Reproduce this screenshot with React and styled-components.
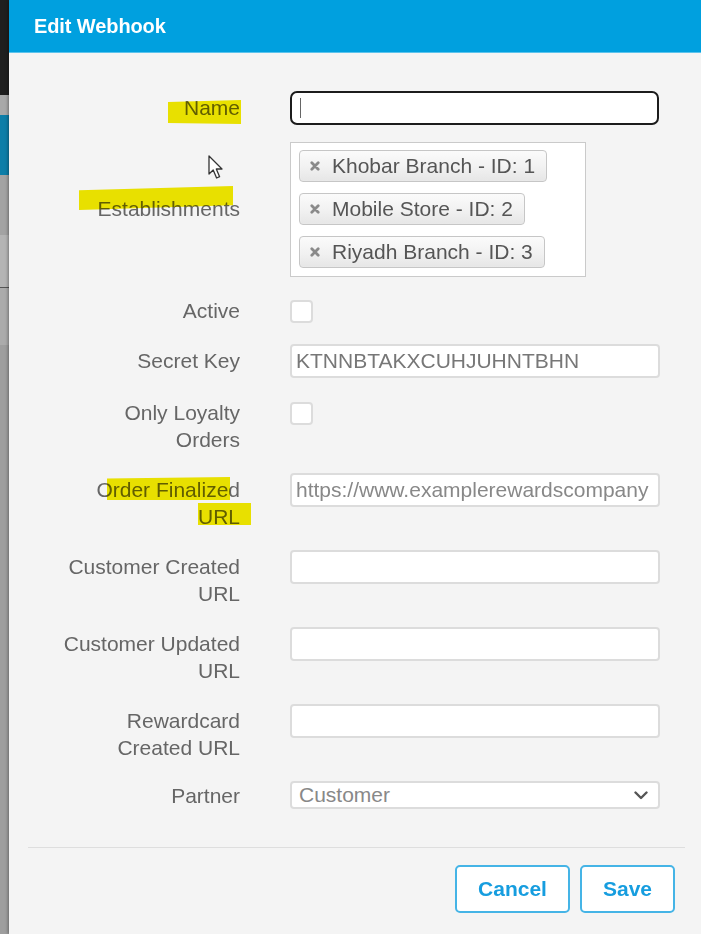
import { createGlobalStyle, styled } from "styled-components";

const GlobalStyle = createGlobalStyle`
  html, body {
    margin: 0;
    padding: 0;
    background: #9e9e9e;
    overflow: hidden;
  }
  * {
    box-sizing: border-box;
  }
`;

const Page = styled.div`
  display: flex;
  width: 701px;
  height: 934px;
  overflow: hidden;
  font-family: "Liberation Sans", Arial, sans-serif;
`;

const Backdrop = styled.div`
  width: 9px;
  flex-shrink: 0;
  display: flex;
  flex-direction: column;
`;

const Strip = styled.div`
  height: ${(p) => p.$h}px;
  flex-shrink: 0;
  background: ${(p) => p.$bg};
  ${(p) => (p.$grow ? "flex: 1;" : "")}
`;

const Modal = styled.div`
  width: 695px;
  flex-shrink: 0;
  background: #f4f4f4;
  display: flex;
  flex-direction: column;
  box-shadow: -1px 0 3px rgba(0, 0, 0, 0.35);
`;

const Header = styled.header`
  height: 53px;
  background: #00a0df;
  border-bottom: 1px solid #5cc3ec;
  display: flex;
  align-items: center;
  padding-left: 25px;
  h2 {
    margin: 0;
    color: #fff;
    font-size: 20px;
    font-weight: 700;
    letter-spacing: -0.1px;
  }
`;

const Body = styled.div`
  padding-top: 38px;
  display: flex;
  flex-direction: column;
  gap: 20px;
`;

const Row = styled.div`
  position: relative;
  display: grid;
  grid-template-columns: 231px 370px;
  column-gap: 50px;
  align-items: start;
  margin-bottom: ${(p) => p.$pull || 0}px;
`;

const Label = styled.div`
  position: relative;
  text-align: right;
  font-size: 21px;
  line-height: 27px;
  color: #666;
  padding-top: ${(p) => p.$offset || 0}px;
`;

const Line = styled.span`
  position: relative;
  display: block;
`;

const Marker = styled.span`
  position: absolute;
  top: ${(p) => p.$top}px;
  right: ${(p) => p.$right}px;
  width: ${(p) => p.$w}px;
  height: ${(p) => p.$h}px;
  background: #f3ea00;
  mix-blend-mode: multiply;
  clip-path: ${(p) => p.$clip || "none"};
`;

const TextInput = styled.input`
  width: 370px;
  height: 34px;
  border: 2px solid #dcdcdc;
  border-radius: 4px;
  background: #fff;
  padding: 0 4px;
  font-family: inherit;
  font-size: 21px;
  color: ${(p) => p.$color || "#777"};
  outline: none;
`;

const FocusBox = styled.div`
  width: 369px;
  height: 34px;
  border: 2px solid #1c1c1c;
  border-radius: 7px;
  background: #fff;
  display: flex;
  align-items: center;
  padding-left: 8px;
`;

const Caret = styled.span`
  width: 1px;
  height: 20px;
  background: #666;
`;

const TagBox = styled.div`
  width: 296px;
  border: 1px solid #cacaca;
  background: #fff;
  padding: 7px 8px 8px 8px;
  display: flex;
  flex-direction: column;
  align-items: flex-start;
  gap: 11px;
`;

const Tag = styled.div`
  height: 32px;
  display: flex;
  align-items: center;
  gap: 12px;
  padding: 0 11px 0 10px;
  border: 1px solid #c6c6c6;
  border-radius: 4px;
  background: linear-gradient(#fbfbfb 0%, #f1f1f1 55%, #e6e6e6 100%);
  box-shadow: inset 0 0 1px #fff;
  font-size: 21px;
  color: #555;
  white-space: nowrap;
`;

const Check = styled.div`
  width: 23px;
  height: 23px;
  margin-top: ${(p) => p.$top || 0}px;
  border: 2px solid #dcdcdc;
  border-radius: 4px;
  background: #fff;
`;

const Select = styled.div`
  width: 370px;
  height: 28px;
  border: 2px solid #dcdcdc;
  border-radius: 4px;
  background: #fff;
  display: flex;
  align-items: center;
  justify-content: space-between;
  padding: 0 10px 0 7px;
  font-size: 21px;
  color: #888;
`;

const Pointer = styled.svg`
  position: absolute;
  left: 199px;
  top: 13px;
`;

const Footer = styled.footer`
  margin: 38px 19px 0;
  border-top: 1px solid #dedede;
  padding: 17px 10px 0 0;
  display: flex;
  justify-content: flex-end;
  gap: 10px;
`;

const Button = styled.button`
  height: 48px;
  padding: 0 21px;
  border: 2px solid #45b4e6;
  border-radius: 5px;
  background: #fff;
  color: #169ddf;
  font-family: inherit;
  font-size: 21px;
  font-weight: 700;
`;

const RemoveIcon = () => (
  <svg width="10" height="10" viewBox="0 0 10 10">
    <path d="M1.8 1.8 L8.2 8.2 M8.2 1.8 L1.8 8.2" stroke="#8a8a8a" strokeWidth="2.8" strokeLinecap="round" />
  </svg>
);

const Chevron = () => (
  <svg width="14" height="9" viewBox="0 0 14 9">
    <path d="M1.5 1.5 L7 7 L12.5 1.5" fill="none" stroke="#555" strokeWidth="2.4" strokeLinecap="round" strokeLinejoin="round" />
  </svg>
);

const tags = ["Khobar Branch - ID: 1", "Mobile Store - ID: 2", "Riyadh Branch - ID: 3"];

const App = () => {
  return (
    <>
      <GlobalStyle />
      <Page>
        <Backdrop>
          <Strip $h={95} $bg="#1f1f1f" />
          <Strip $h={20} $bg="#a9a9a9" />
          <Strip $h={60} $bg="#0d7ea8" />
          <Strip $h={60} $bg="#a3a3a3" />
          <Strip $h={52} $bg="#b4b4b4" />
          <Strip $h={1} $bg="#555" />
          <Strip $h={57} $bg="#ababab" />
          <Strip $grow $bg="#9e9e9e" />
        </Backdrop>
        <Modal>
          <Header>
            <h2>Edit Webhook</h2>
          </Header>
          <Body>
            <Row $pull={-3}>
              <Label $offset={3}>
                <Line>
                  <Marker $top={6} $right={-1} $w={73} $h={24} $clip="polygon(0 8%, 100% 0, 100% 100%, 0 96%)" />
                  Name
                </Line>
              </Label>
              <FocusBox>
                <Caret />
              </FocusBox>
            </Row>

            <Row>
              <Label $offset={53}>
                <Line>
                  <Marker $top={-9} $right={7} $w={154} $h={24} $clip="polygon(0 18%, 100% 0, 100% 80%, 0 100%)" />
                  Establishments
                </Line>
              </Label>
              <TagBox>
                {tags.map((t) => (
                  <Tag key={t}>
                    <RemoveIcon />
                    {t}
                  </Tag>
                ))}
              </TagBox>
              <Pointer width="16" height="26" viewBox="0 0 16 26">
                <path d="M1 1 L1 19 L5.2 15 L8.6 23 L11.6 21.7 L8.3 14 L14 14 Z" fill="#fff" stroke="#333" strokeWidth="1.3" strokeLinejoin="round" />
              </Pointer>
            </Row>

            <Row>
              <Label>Active</Label>
              <Check $top={3} />
            </Row>

            <Row>
              <Label $offset={3}>Secret Key</Label>
              <TextInput readOnly value="KTNNBTAKXCUHJUHNTBHN" />
            </Row>

            <Row>
              <Label $offset={1}>
                Only Loyalty
                <br />
                Orders
              </Label>
              <Check $top={4} />
            </Row>

            <Row>
              <Label $offset={3}>
                <Line>
                  <Marker $top={1} $right={10} $w={123} $h={23} $clip="polygon(0 6%, 100% 0, 100% 100%, 0 100%)" />
                  Order Finalized
                </Line>
                <Line>
                  <Marker $top={0} $right={-11} $w={53} $h={22} />
                  URL
                </Line>
              </Label>
              <TextInput readOnly $color="#888" value="https://www.examplerewardscompany" />
            </Row>

            <Row>
              <Label $offset={3}>
                Customer Created
                <br />
                URL
              </Label>
              <TextInput readOnly value="" />
            </Row>

            <Row>
              <Label $offset={3}>
                Customer Updated
                <br />
                URL
              </Label>
              <TextInput readOnly value="" />
            </Row>

            <Row>
              <Label $offset={3}>
                Rewardcard
                <br />
                Created URL
              </Label>
              <TextInput readOnly value="" />
            </Row>

            <Row>
              <Label $offset={1}>Partner</Label>
              <Select>
                <span>Customer</span>
                <Chevron />
              </Select>
            </Row>
          </Body>
          <Footer>
            <Button>Cancel</Button>
            <Button>Save</Button>
          </Footer>
        </Modal>
      </Page>
    </>
  );
};

export default App;
